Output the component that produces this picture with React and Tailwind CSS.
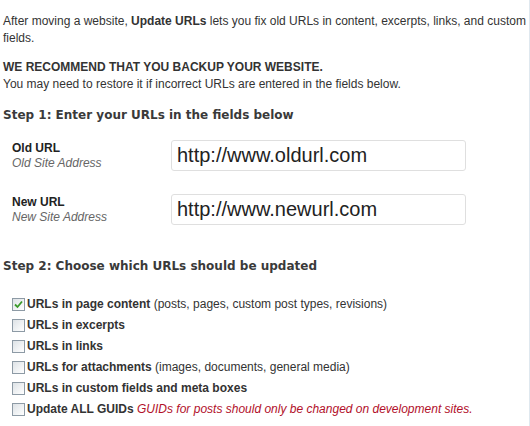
export default function App() {
  const options = [
    { label: 'URLs in page content', note: '(posts, pages, custom post types, revisions)', checked: true },
    { label: 'URLs in excerpts' },
    { label: 'URLs in links' },
    { label: 'URLs for attachments', note: '(images, documents, general media)' },
    { label: 'URLs in custom fields and meta boxes' },
  ]

  return (
    <div className="min-h-[426px] w-[530px] border-r border-[#dfe8ef] bg-white pl-[3px] pt-[13px] font-['Liberation_Sans',Arial,sans-serif] text-[12px] leading-[17px] text-[#333]">
      <p>
        After moving a website, <b>Update URLs</b> lets you fix old URLs in content, excerpts, links, and custom
        fields.
      </p>
      <p className="mt-[12px]">
        <b>WE RECOMMEND THAT YOU BACKUP YOUR WEBSITE.</b>
        <br />
        You may need to restore it if incorrect URLs are entered in the fields below.
      </p>

      <h3 className="mt-[14px] font-['DejaVu_Sans',Verdana,sans-serif] text-[12px] font-bold text-[#3a3a3a]">
        Step 1: Enter your URLs in the fields below
      </h3>

      <div className="mt-[16px] flex flex-col gap-[23px] pl-[9px]">
        <div className="flex items-center">
          <div className="w-[159px] leading-[15px]">
            <div className="font-bold text-[#222]">Old URL</div>
            <div className="italic text-[#666]">Old Site Address</div>
          </div>
          <div className="flex h-[31px] w-[295px] items-center rounded-[3px] border border-[#dfdfdf] pl-[5px] text-[20px] text-[#222]">
            http://www.oldurl.com
          </div>
        </div>
        <div className="flex items-center">
          <div className="w-[159px] leading-[15px]">
            <div className="font-bold text-[#222]">New URL</div>
            <div className="italic text-[#666]">New Site Address</div>
          </div>
          <div className="flex h-[31px] w-[295px] items-center rounded-[3px] border border-[#dfdfdf] pl-[5px] text-[20px] text-[#222]">
            http://www.newurl.com
          </div>
        </div>
      </div>

      <h3 className="mt-[33px] font-['DejaVu_Sans',Verdana,sans-serif] text-[12px] font-bold text-[#3a3a3a]">
        Step 2: Choose which URLs should be updated
      </h3>

      <div className="mt-[21px] flex flex-col gap-[4px] pl-[9px]">
        {options.map((o) => (
          <div key={o.label} className="flex h-[17px] items-center">
            <Box checked={o.checked} />
            <span className="ml-[2px]">
              <b>{o.label}</b>
              {o.note && <> {o.note}</>}
            </span>
          </div>
        ))}
        <div className="flex h-[17px] items-center">
          <Box />
          <span className="ml-[2px]">
            <b>Update ALL GUIDs</b>{' '}
            <i className="text-[#b2102a]">GUIDs for posts should only be changed on development sites.</i>
          </span>
        </div>
      </div>
    </div>
  )
}

function Box({ checked }) {
  return (
    <span className="flex h-[13px] w-[13px] items-center justify-center border border-[#8d9aa5] bg-gradient-to-br from-[#dde2e6] to-white">
      {checked && (
        <svg width="9" height="9" viewBox="0 0 9 9">
          <path d="M1 4.5 L3.5 7 L8 1.5" fill="none" stroke="#3a9a2a" strokeWidth="1.8" />
        </svg>
      )}
    </span>
  )
}
